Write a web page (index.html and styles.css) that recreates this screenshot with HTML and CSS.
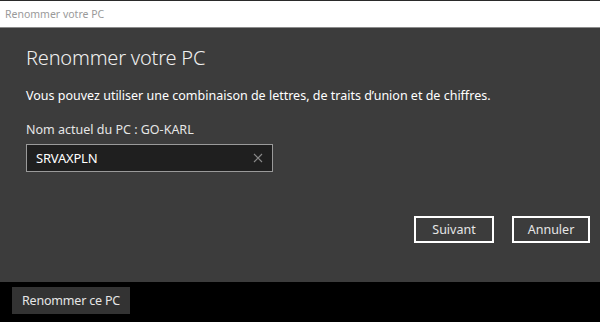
FILE: index.html
```html
<!DOCTYPE html>
<html lang="fr">
<head>
    <meta charset="UTF-8">
    <meta name="viewport" content="width=device-width, initial-scale=1.0">
    <title>Renommer votre PC</title>
    <link rel="stylesheet" href="styles.css">
</head>
<body>
    <div class="titlebar">Renommer votre PC</div>

    <div class="dialog">
        <h1>Renommer votre PC</h1>
        <p class="hint">Vous pouvez utiliser une combinaison de lettres, de traits d’union et de chiffres.</p>

        <label for="pcName">Nom actuel du PC : GO-KARL</label>
        <div class="textbox">
            <input type="text" id="pcName" value="SRVAXPLN">
            <svg class="clear" width="10" height="10" viewBox="0 0 10 10">
                <path d="M1 1 L9 9 M9 1 L1 9" stroke="#8a8a8a" stroke-width="1.1" fill="none"/>
            </svg>
        </div>

        <div class="actions">
            <button class="btn">Suivant</button>
            <button class="btn">Annuler</button>
        </div>
    </div>

    <div class="footer">
        <button class="rename">Renommer ce PC</button>
    </div>
</body>
</html>
```

FILE: styles.css
```css
* {
    margin: 0;
    padding: 0;
    box-sizing: border-box;
    font-family: 'Noto Sans', 'Open Sans', sans-serif;
}

body {
    width: 600px;
    height: 322px;
    background: #000;
    border-top: 1px solid #2a2a2a;
    overflow: hidden;
}

.titlebar {
    height: 27px;
    background: #fff;
    color: #9a9a9a;
    font-size: 10.5px;
    padding: 6px 0 0 5px;
    border-bottom: 1px solid #8c8c8c;
}

.dialog {
    height: 254px;
    background: #3c3c3c;
    padding: 16px 10px 0 26px;
}

h1 {
    color: #f0f0f0;
    font-size: 20px;
    font-weight: 300;
    letter-spacing: -0.2px;
    margin-bottom: 16px;
}

.hint {
    color: #fff;
    font-size: 12.5px;
    margin-bottom: 17px;
}

label {
    display: block;
    color: #e6e6e6;
    font-size: 12.5px;
    margin-bottom: 6px;
}

.textbox {
    width: 247px;
    height: 28px;
    border: 1px solid #9a9a9a;
    background: #1f1f1f;
    display: flex;
    align-items: center;
    padding: 0 9px 0 9px;
}

.textbox input {
    flex: 1;
    background: transparent;
    border: none;
    outline: none;
    color: #fff;
    font-size: 13px;
    letter-spacing: -0.2px;
}

.actions {
    display: flex;
    justify-content: flex-end;
    gap: 18px;
    margin-top: 44px;
}

.btn {
    width: 80px;
    height: 27px;
    background: transparent;
    border: 2px solid #fff;
    color: #e6e6e6;
    font-size: 12.5px;
}

.btn + .btn {
    width: 78px;
}

.footer {
    padding: 5px 0 0 12px;
}

.rename {
    width: 118px;
    height: 27px;
    background: #333;
    border: none;
    color: #e6e6e6;
    font-size: 12.5px;
    letter-spacing: -0.2px;
}
```
